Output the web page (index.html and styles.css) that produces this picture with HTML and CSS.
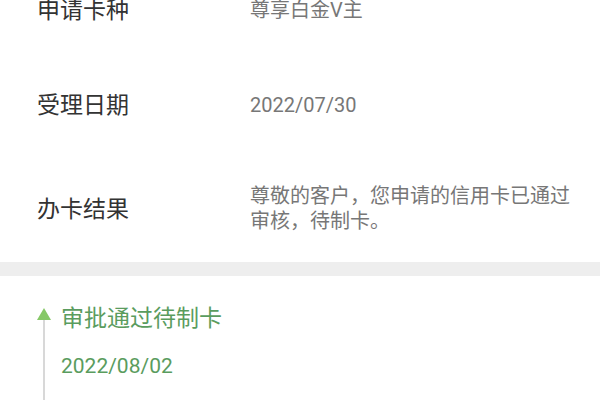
FILE: index.html
```html
<!DOCTYPE html>
<html lang="zh-CN">
<head>
<meta charset="utf-8">
<link rel="stylesheet" href="styles.css">
</head>
<body>
<div class="page">
  <section class="info">
    <div class="row">
      <div class="label">申请卡种</div>
      <div class="value">尊享白金V主</div>
    </div>
    <div class="row">
      <div class="label">受理日期</div>
      <div class="value">2022/07/30</div>
    </div>
    <div class="row row-last">
      <div class="label">办卡结果</div>
      <div class="value">尊敬的客户，您申请的信用卡已通过审核，待制卡。</div>
    </div>
  </section>
  <div class="divider"></div>
  <section class="timeline">
    <div class="item">
      <div class="marker">
        <div class="tri"></div>
        <div class="line"></div>
      </div>
      <div class="content">
        <div class="title">审批通过待制卡</div>
        <div class="date">2022/08/02</div>
      </div>
    </div>
  </section>
</div>
</body>
</html>
```
FILE: styles.css
```css
html, body {
  margin: 0;
  padding: 0;
  background: #ffffff;
  overflow: hidden;
}
body {
  font-family: Roboto, "Noto Sans CJK SC", "Noto Sans", sans-serif;
  width: 600px;
  height: 400px;
}
.page {
  margin-top: -37px;
}
.info {
  display: flex;
  flex-direction: column;
}
.row {
  display: flex;
  align-items: center;
  padding: 34px 15px 34px 37px;
}
.row-last {
  padding-top: 31px;
  padding-bottom: 28px;
}
.label {
  width: 213px;
  flex-shrink: 0;
  font-size: 23px;
  line-height: 27px;
  color: #333333;
}
.value {
  flex: 1;
  font-size: 20px;
  line-height: 25px;
  color: #777777;
}
.divider {
  height: 14px;
  background: #eeeeee;
}
.timeline {
  padding: 29px 30px 0 37px;
}
.item {
  display: flex;
}
.marker {
  width: 14px;
  display: flex;
  flex-direction: column;
  align-items: center;
  flex-shrink: 0;
}
.tri {
  margin-top: 3px;
  width: 0;
  height: 0;
  border-left: 7px solid transparent;
  border-right: 7px solid transparent;
  border-bottom: 12px solid #86c867;
}
.line {
  width: 2px;
  flex: 1;
  min-height: 80px;
  background: #d8d8d8;
}
.content {
  margin-left: 10px;
  padding-bottom: 40px;
}
.title {
  font-size: 23px;
  line-height: 27px;
  color: #5a9c5e;
}
.date {
  margin-top: 21px;
  font-size: 21px;
  line-height: 26px;
  color: #5a9c5e;
}
```
